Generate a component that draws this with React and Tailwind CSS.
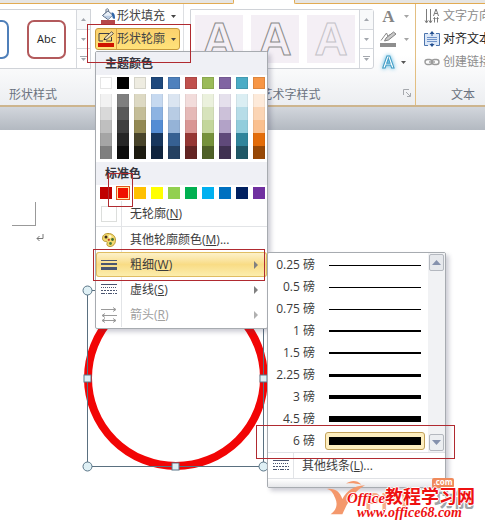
import React, { useState } from 'react';
import clsx from 'clsx';

const THEME = ['bg-white', 'bg-black', 'bg-[#eeece1]', 'bg-[#1f497d]', 'bg-[#4f81bd]', 'bg-[#c0504d]', 'bg-[#9bbb59]', 'bg-[#8064a2]', 'bg-[#4bacc6]', 'bg-[#f79646]'];

const SHADES = [
  ['bg-[#f2f2f2]', 'bg-[#d9d9d9]', 'bg-[#bfbfbf]', 'bg-[#a5a5a5]', 'bg-[#7f7f7f]'],
  ['bg-[#7f7f7f]', 'bg-[#595959]', 'bg-[#3f3f3f]', 'bg-[#262626]', 'bg-[#0c0c0c]'],
  ['bg-[#ddd9c3]', 'bg-[#c4bd97]', 'bg-[#938953]', 'bg-[#494429]', 'bg-[#1d1b10]'],
  ['bg-[#c6d9f0]', 'bg-[#8db3e2]', 'bg-[#548dd4]', 'bg-[#17365d]', 'bg-[#0f243e]'],
  ['bg-[#dbe5f1]', 'bg-[#b8cce4]', 'bg-[#95b3d7]', 'bg-[#366092]', 'bg-[#244061]'],
  ['bg-[#f2dcdb]', 'bg-[#e5b9b7]', 'bg-[#d99694]', 'bg-[#953734]', 'bg-[#632423]'],
  ['bg-[#ebf1dd]', 'bg-[#d7e3bc]', 'bg-[#c3d69b]', 'bg-[#76923c]', 'bg-[#4f6128]'],
  ['bg-[#e5e0ec]', 'bg-[#ccc1d9]', 'bg-[#b2a2c7]', 'bg-[#5f497a]', 'bg-[#3f3151]'],
  ['bg-[#dbeef3]', 'bg-[#b7dde8]', 'bg-[#92cddc]', 'bg-[#31859b]', 'bg-[#205867]'],
  ['bg-[#fdeada]', 'bg-[#fbd5b5]', 'bg-[#fac08f]', 'bg-[#e36c09]', 'bg-[#974806]'],
];

const STANDARD = ['bg-[#c00000]', 'bg-[#f01000]', 'bg-[#ffc000]', 'bg-[#ffff00]', 'bg-[#92d050]', 'bg-[#00b050]', 'bg-[#00b0f0]', 'bg-[#0070c0]', 'bg-[#002060]', 'bg-[#7030a0]'];

const WEIGHTS = [
  { pt: '0.25', line: 'h-px' },
  { pt: '0.5', line: 'h-px' },
  { pt: '0.75', line: 'h-px' },
  { pt: '1', line: 'h-[2px]' },
  { pt: '1.5', line: 'h-[2px]' },
  { pt: '2.25', line: 'h-[3px]' },
  { pt: '3', line: 'h-[4px]' },
  { pt: '4.5', line: 'h-[6px]' },
  { pt: '6', line: 'h-[8px]' },
];

function Caret({ className }) {
  return (
    <svg viewBox="0 0 5 3" className={clsx('w-[5px] h-[3px] shrink-0', className)} fill="currentColor">
      <path d="M0 0h5L2.5 3z" />
    </svg>
  );
}

function GalleryScroll() {
  return (
    <div className="w-[14px] shrink-0 flex flex-col border-l border-[#d5d8dd] divide-y divide-[#d5d8dd] text-[#a3a7ad]">
      <button aria-label="向上" className="flex-1 flex items-center justify-center bg-[#f8f9fa]">
        <Caret className="rotate-180" />
      </button>
      <button aria-label="向下" className="flex-1 flex items-center justify-center">
        <Caret />
      </button>
      <button aria-label="其他" className="flex-1 flex flex-col items-center justify-center gap-px">
        <span className="w-[7px] h-px bg-current" />
        <Caret />
      </button>
    </div>
  );
}

function BucketIcon() {
  return (
    <svg viewBox="0 0 16 16" className="w-4 h-4 shrink-0">
      <path d="M6 5V2c0-1.600 2.600-1.600 2.600.2V5" fill="none" stroke="#5b6b80" />
      <path d="M2.500 7.500L8 2.800l4.800 4.400L8 11.500z" fill="#e9eff7" stroke="#4b5f7b" />
      <path d="M3.500 7.700h9L8 11z" fill="#b9cbe2" />
      <path d="M11.500 4.500c2.500 0 3.500 1.800 3.500 6-1 .5-2 .2-2.300-.6z" fill="#2f66a8" />
      <rect x="1" y="12" width="14" height="4" fill="#b5484a" />
    </svg>
  );
}

function PenIcon() {
  return (
    <svg viewBox="0 0 17 16" className="w-[17px] h-4 shrink-0">
      <path d="M11 2.500H1v7.500h4M13.500 6v4H8" fill="none" stroke="#3c3c46" />
      <path d="M6 8.500l1-2L13.500.8l2 1.700L9 8.300z" fill="#f5e2b8" stroke="#4a4642" strokeWidth=".9" />
      <path d="M5.500 9.200l1-2 1.400 1.500z" fill="#222" />
      <rect x="0" y="12" width="16" height="4" fill="#d01400" />
    </svg>
  );
}

function GrayPenIcon() {
  return (
    <svg viewBox="0 0 17 16" className="w-[17px] h-4">
      <path d="M1 9.500L6.500 2 8 5.500 10.500 3" fill="none" stroke="#8a8a8a" />
      <path d="M4.500 10l1.500-3L13.500 1 16 3 8.500 9z" fill="#c9c9c9" stroke="#777" strokeWidth=".9" />
      <rect x="0" y="12" width="16" height="4" fill="#8e8e8e" />
    </svg>
  );
}

function DirectionIcon() {
  return (
    <svg viewBox="0 0 16 16" className="w-4 h-4 shrink-0" fill="none" stroke="#7c7c7c">
      <path d="M2.500 1v13M6.500 1v13M1 12.500L2.500 15 4 12.500M5 12.500L6.500 15 8 12.500" />
      <path d="M9.500 8L12 1l2.500 7M10.400 5.500h3.200M10.500 9.500v5M13.500 9.500v5M9.500 11l1-1.500 1 1.500M12.500 11l1-1.500 1 1.500" />
    </svg>
  );
}

function AlignIcon() {
  return (
    <svg viewBox="0 0 16 16" className="w-4 h-4 shrink-0">
      <rect x="1" y="2.500" width="14" height="12" fill="#dbe7f7" />
      <path d="M4 2.500H.5v12H4M12 2.500h3.500v12H12" fill="none" stroke="#4c74ad" />
      <path d="M3 6.500h10M3 8.500h10M3 10.500h10" stroke="#6f93c9" />
      <path d="M8 0l2.500 3h-5zM8 16l2.500-3h-5z" fill="#234f8f" />
      <path d="M8 2v3M8 12v2" stroke="#234f8f" />
    </svg>
  );
}

function ChainIcon() {
  return (
    <svg viewBox="0 0 16 16" className="w-4 h-4 shrink-0" fill="none" stroke="#9a9a9a" strokeWidth="1.400">
      <rect x="1" y="5.500" width="7" height="5" rx="2.500" />
      <rect x="8" y="5.500" width="7" height="5" rx="2.500" />
      <path d="M5 8h6" />
    </svg>
  );
}

function PaletteIcon() {
  return (
    <svg viewBox="0 0 16 16" className="w-4 h-4">
      <path d="M7 1.500C3 1.500 1.500 4 1.500 6.200c0 2.300 1.500 3.300 3.300 3.300 1.500 0 1.600.8 1.200 2-.5 1.800.8 3 3 3 3.200 0 5.500-2.800 5.500-6.200C14.500 4 11.500 1.500 7 1.500z" fill="#f2d96e" stroke="#b9962f" />
      <circle cx="5" cy="5" r="1.500" fill="#3b2a1a" />
      <circle cx="9" cy="4.500" r="1.500" fill="#fff7d0" />
      <circle cx="11.500" cy="7.500" r="1.400" fill="#3d6b35" />
      <circle cx="9.500" cy="11.500" r="1.400" fill="#4a7d3a" />
      <circle cx="7.800" cy="7.800" r="1.100" fill="#c0392b" />
    </svg>
  );
}

function WeightIcon() {
  return (
    <svg viewBox="0 0 16 12" className="w-4 h-3">
      <path d="M0 1.500h16" stroke="#4a5570" />
      <path d="M0 5h16" stroke="#4a5570" strokeWidth="2" />
      <path d="M0 9.500h16" stroke="#4a5570" strokeWidth="3" />
    </svg>
  );
}

function DashIcon() {
  return (
    <svg viewBox="0 0 16 12" className="w-4 h-3" stroke="#4a5570">
      <path d="M0 .5h16" />
      <path d="M0 3.500h16" strokeDasharray="1 1" />
      <path d="M0 6.500h16" strokeDasharray="2 1" />
      <path d="M0 9.500h16" strokeDasharray="4 1 1 1" />
    </svg>
  );
}

function ArrowsIcon() {
  return (
    <svg viewBox="0 0 16 16" className="w-4 h-4" stroke="#9a9a9a" fill="none">
      <path d="M0 2.500h14.500M12 .5l3 2-3 2M1 8.500h15M4 6.500l-3 2 3 2M1 13.500h14M4 11.500l-3 2 3 2M12 11.500l3 2-3 2" />
    </svg>
  );
}

// red rectangles drawn over the capture to point at each step
function Marker({ className }) {
  return <div className={clsx('absolute z-40 border border-[#b02a30] pointer-events-none', className)} />;
}

function MenuItem({ icon, label, hotkey, suffix, arrow, active, disabled, children }) {
  return (
    <li className="relative">
      <button
        disabled={disabled}
        className={clsx(
          'relative w-full h-[25px] flex items-center text-left rounded-[3px]',
          disabled ? 'text-[#a0a0a0]' : 'text-[#3b3b3b]',
          active && 'bg-linear-to-b from-[#fdf3cf] via-[#f9dc85] to-[#fcefb0] shadow-[inset_0_0_0_1px_#e0bd62]'
        )}
      >
        <span className={clsx('w-[26px] h-full flex items-center justify-center border-r', active ? 'border-transparent' : 'border-[#e2e4e7]')}>
          {icon}
        </span>
        <span className="pl-2 flex-1 whitespace-nowrap">
          {label}(<u>{hotkey}</u>){suffix}
        </span>
        {arrow && (
          <svg viewBox="0 0 4 8" className={clsx('w-1 h-2 mr-[9px]', disabled ? 'text-[#b0b0b0]' : 'text-[#808080]')} fill="currentColor">
            <path d="M0 0l4 4-4 4z" />
          </svg>
        )}
      </button>
      {children}
    </li>
  );
}

function WeightMenu() {
  const [weight, setWeight] = useState('6');

  return (
    <div className="absolute left-full top-0 z-30 w-[179px] rounded-[2px] border border-[#a7abb0] bg-white shadow-[3px_3px_4px_rgba(60,60,90,0.25)]">
      <div className="flex">
        <ul className="flex-1 pt-px">
          {WEIGHTS.map(({ pt, line }) => (
            <li key={pt}>
              <button onClick={() => setWeight(pt)} className="w-full h-[22px] flex items-center text-[#3b3b3b]">
                <span className="w-[47px] text-right whitespace-nowrap">{pt} 磅</span>
                <span
                  className={clsx(
                    'ml-[10px] w-[100px] h-[18px] px-[3px] flex items-center rounded-[3px] border',
                    weight === pt ? 'border-[#c2a15a] bg-[#fdeec0]' : 'border-transparent'
                  )}
                >
                  <span className={clsx('w-full bg-black', line)} />
                </span>
              </button>
            </li>
          ))}
        </ul>
        <div className="w-[17px] flex flex-col justify-between bg-[#f1f2f4] py-px px-px text-[#8591ad]">
          <button aria-label="向上滚动" className="h-[17px] flex items-center justify-center rounded-[2px] border border-[#b4b8bf] bg-[#e6e8ec]">
            <svg viewBox="0 0 9 5" className="w-[9px] h-[5px]" fill="currentColor"><path d="M0 5h9L4.500 0z" /></svg>
          </button>
          <button aria-label="向下滚动" className="h-[17px] flex items-center justify-center rounded-[2px] border border-[#b4b8bf] bg-[#eceef1]">
            <svg viewBox="0 0 9 5" className="w-[9px] h-[5px]" fill="currentColor"><path d="M0 0h9L4.500 5z" /></svg>
          </button>
        </div>
      </div>
      <button className="w-full h-[27px] flex items-center border-y border-[#dfe1e5] text-[#3b3b3b]">
        <span className="w-[26px] h-full flex items-center justify-center border-r border-[#e2e4e7]">
          <DashIcon />
        </span>
        <span className="pl-2">其他线条(<u>L</u>)...</span>
      </button>
      <div className="h-2 bg-linear-to-b from-white to-[#e6e7ea]" />
      <Marker className="-left-3 -right-[10px] top-[172px] h-[34px]" />
    </div>
  );
}

function OutlineMenu() {
  return (
    <div className="absolute left-0 top-[23px] z-20 w-[173px] rounded-[2px] border border-[#a7abb0] bg-white pb-px shadow-[3px_3px_4px_rgba(60,60,90,0.25)]">
      <h3 className="h-[23px] pl-[9px] flex items-center bg-[#eff0f5] font-bold text-[#35353d]">主题颜色</h3>
      <div className="flex gap-[5px] pl-1 pt-[2px]">
        {THEME.map((color, i) => (
          <button key={i} aria-label={`主题颜色 ${i + 1}`} className={clsx('w-3 h-3 border border-black/10', color)} />
        ))}
      </div>
      <div className="flex gap-[5px] pl-1 pt-[5px] pb-[3px]">
        {SHADES.map((column, i) => (
          <div key={i} className="w-3 flex flex-col">
            {column.map((color) => (
              <button key={color} aria-label={`深浅 ${i + 1}`} className={clsx('h-[13px] border-x border-black/5', color)} />
            ))}
          </div>
        ))}
      </div>
      <div className="relative">
        <h3 className="h-[23px] pl-[9px] flex items-center bg-[#eff0f5] font-bold text-[#35353d]">标准色</h3>
        <div className="flex gap-[5px] pl-1 pt-[2px] pb-[2px]">
          {STANDARD.map((color, i) => (
            <button
              key={color}
              aria-label={`标准色 ${i + 1}`}
              className={clsx('w-3 h-3', color, i === 1 && 'border border-[#ffe9a8] outline outline-[#e0561c]')}
            />
          ))}
        </div>
        <Marker className="left-3 top-[11px] w-[25px] h-[34px]" />
      </div>
      <ul>
        <MenuItem icon={<span className="w-4 h-4 border border-[#dcdedc] bg-white" />} label="无轮廓" hotkey="N" />
        <li className="h-px bg-[#e2e4e7]" />
        <MenuItem icon={<PaletteIcon />} label="其他轮廓颜色" hotkey="M" suffix="..." />
        <MenuItem icon={<WeightIcon />} label="粗细" hotkey="W" arrow active>
          <WeightMenu />
          <Marker className="-left-[3px] right-[2px] -top-[3px] h-8" />
        </MenuItem>
        <MenuItem icon={<DashIcon />} label="虚线" hotkey="S" arrow />
        <MenuItem icon={<ArrowsIcon />} label="箭头" hotkey="R" arrow disabled />
      </ul>
    </div>
  );
}

function Ribbon() {
  return (
    <header>
      <div className="h-1 flex bg-white">
        <div className="w-[234px] rounded-br-[2px] border-b border-r border-[#e2ab52] bg-[#e6e5e3]" />
        <div className="w-[60px]" />
        <div className="flex-1 rounded-bl-[2px] border-b border-l border-[#e2ab52] bg-[#e6e5e3]" />
      </div>
      <div className="flex border-b-2 border-[#cdb58e] bg-linear-to-b from-white via-white to-[#eceef1]">
        {/* shape styles */}
        <section className="w-[184px] shrink-0 border-r border-[#dddfe2] pt-px">
          <div className="h-[68px] flex">
            <div className="mt-1 h-[60px] w-[91px] flex border-y border-r border-[#d0d3d8] bg-white">
              <div className="w-[78px] h-full flex items-center justify-end gap-[18px] pr-[10px] overflow-hidden text-[11px] text-[#222]">
                <button className="w-[39px] h-[39px] shrink-0 rounded-[7px] border-2 border-[#4f7fb9]">Abc</button>
                <button className="w-[39px] h-[39px] shrink-0 rounded-[7px] border-2 border-[#b35a5c]">Abc</button>
              </div>
              <GalleryScroll />
            </div>
            <div className="relative ml-1 w-[85px] flex flex-col gap-px text-[#444]">
              <button className="h-[22px] pl-[5px] flex items-center whitespace-nowrap">
                <BucketIcon />
                <span className="pl-px pr-[6px]">形状填充</span>
                <Caret />
              </button>
              <div className="relative">
                <button className="w-full h-[22px] flex items-center rounded-[3px] border border-[#c79a3c] bg-linear-to-b from-[#fbd16d] to-[#ffe27a] whitespace-nowrap">
                  <span className="w-[21px] h-full pl-[2px] flex items-center border-r border-[#d9a648]">
                    <PenIcon />
                  </span>
                  <span className="pr-[6px]">形状轮廓</span>
                  <Caret />
                </button>
                <OutlineMenu />
                <Marker className="-left-2 -right-[11px] -top-1 h-[39px]" />
              </div>
            </div>
          </div>
          <h2 className="h-8 pt-3 pl-[9px] leading-5 text-[#6b7380]">形状样式</h2>
        </section>

        {/* WordArt styles */}
        <section className="w-[232px] shrink-0 border-r border-[#e3bf82] pt-px pl-[6px]">
          <div className="h-[68px] flex">
            <div className="mt-1 h-[60px] w-[184px] flex border border-[#d0d3d8] rounded-r-[3px] bg-white">
              <div className="flex-1 flex items-center gap-2 pl-1 font-['Liberation_Sans'] text-[46px] font-bold leading-none text-[#f4eff5]">
                <button className="w-12 h-12 bg-[#f4eff5] [-webkit-text-stroke:1px_#8b8b8b]">A</button>
                <button className="w-12 h-12 bg-[#f4eff5] [-webkit-text-stroke:1px_#8b8b8b]">A</button>
                <button className="w-12 h-12 bg-[#f4eff5] [-webkit-text-stroke:1px_#c4c2c8]">A</button>
              </div>
              <GalleryScroll />
            </div>
            <div className="ml-[6px] flex flex-col gap-px text-[#a5a5a5]">
              <button className="h-[22px] flex items-center gap-[7px]">
                <span className="w-[17px] font-['Liberation_Serif'] text-[17px] font-bold leading-none text-[#858585]">A</span>
                <Caret />
              </button>
              <button aria-label="文本轮廓" className="h-[22px] flex items-center gap-[7px]">
                <GrayPenIcon />
                <Caret />
              </button>
              <button className="h-[22px] flex items-center gap-1">
                <span className="w-[17px] font-['Liberation_Sans'] text-[17px] font-bold leading-none text-white [-webkit-text-stroke:1px_#3f9cc4] drop-shadow-[0_0_2px_#55b5e0]">A</span>
                <Caret className="text-[#555]" />
              </button>
            </div>
          </div>
          <div className="h-8 pt-3 pr-1 flex">
            <h2 className="flex-1 pr-3 text-center leading-5 text-[#6b7380]">艺术字样式</h2>
            <button aria-label="设置文本效果格式" className="mt-1 w-2 h-2">
              <svg viewBox="0 0 8 8" className="w-2 h-2" fill="none" stroke="#a5a8ad">
                <path d="M.5 6V.5H6M3 3l4 4M7.500 4v3.500H4" />
              </svg>
            </button>
          </div>
        </section>

        {/* text */}
        <section className="w-[90px] shrink-0 pt-px pl-2">
          <div className="h-[68px] flex flex-col gap-px whitespace-nowrap text-[#8c8c8c]">
            <button className="h-[22px] flex items-center gap-[3px]"><DirectionIcon />文字方向</button>
            <button className="h-[22px] flex items-center gap-[3px] text-[#222]"><AlignIcon />对齐文本</button>
            <button className="h-[22px] flex items-center gap-[3px]"><ChainIcon />创建链接</button>
          </div>
          <h2 className="h-8 pt-3 pl-[27px] leading-5 text-[#6b7380]">文本</h2>
        </section>
      </div>
    </header>
  );
}

function Document() {
  return (
    <main className="relative flex-1 bg-white">
      <div className="h-[23px] bg-linear-to-b from-[#d2d6dc] to-[#b3b9c1]" />
      {/* margin corner and paragraph mark */}
      <div className="mt-[72px] ml-3 w-6 h-6 border-r border-b border-[#999]" />
      <svg viewBox="0 0 8 8" className="mt-2 ml-9 w-2 h-2" fill="none" stroke="#777">
        <path d="M7 0v4.500H1M3.500 2L1 4.500 3.500 7" />
      </svg>

      {/* selected ellipse with its handles */}
      <svg viewBox="0 0 190 190" className="absolute left-[81px] top-[177px] w-[190px] h-[190px]">
        <circle cx="95" cy="94" r="88" fill="none" stroke="#f20505" strokeWidth="8" />
        <rect x="6.500" y="6.500" width="176" height="176" fill="none" stroke="#5a7080" />
        <g fill="#dff0f5" stroke="#5b7688">
          <circle cx="6.500" cy="6.500" r="4.500" />
          <circle cx="6.500" cy="182.500" r="4.500" />
          <circle cx="182.500" cy="182.500" r="4.500" />
          <rect x="3" y="91" width="7" height="7" />
          <rect x="179" y="91" width="7" height="7" />
          <rect x="91" y="179" width="7" height="7" />
        </g>
      </svg>
    </main>
  );
}

function Watermark() {
  return (
    <div className="absolute z-50 right-2 bottom-1 w-[156px] h-11">
      <svg viewBox="0 0 42 38" className="absolute left-[6px] top-[2px] w-[38px] h-9" fill="#f4986c">
        <path d="M0 9c9-1 14 3 17 11C22 11 29 6 42 5 31 11 24 21 17 37H4c7-5 8-12 5-18C7 14 5 10 0 9z" />
        <path d="M21 3c6-4 12-4 17 1-6-1-11-2-17-1z" />
      </svg>
      <span className="absolute left-11 top-[12px] font-['Liberation_Sans'] text-[24px] font-bold leading-none text-[#f6ae8a]" aria-hidden="true">PPT</span>
      <span className="absolute left-[113px] top-[12px] text-[20px] font-bold leading-none whitespace-nowrap text-[#a0a4a8]" aria-hidden="true">功能</span>
      <span className="absolute left-[111px] top-0 h-[10px] w-[22px] rounded-[2px] bg-[#f08a5b] text-center text-[8px] leading-[8px] font-bold text-white">.com</span>
      <div className="absolute left-[26px] top-[11px] flex flex-col font-['Liberation_Serif','Noto_Sans_CJK_SC',serif] text-[#ee1111] whitespace-nowrap [text-shadow:-1px_0_#fff,1px_0_#fff,0_-1px_#fff,0_1px_#fff]">
        <strong className="text-[18px] leading-4"><i className="text-[15px]">Office</i>教程学习网</strong>
        <a href="#" className="pl-[10px] text-[14px] leading-[14px] italic font-bold">www.office68.com</a>
      </div>
    </div>
  );
}

export default function App() {
  return (
    <div className="relative min-h-screen flex flex-col overflow-hidden bg-white font-['Open_Sans','Noto_Sans_CJK_SC',sans-serif] text-[12px] leading-4">
      <Ribbon />
      <Document />
      <Watermark />
    </div>
  );
}
